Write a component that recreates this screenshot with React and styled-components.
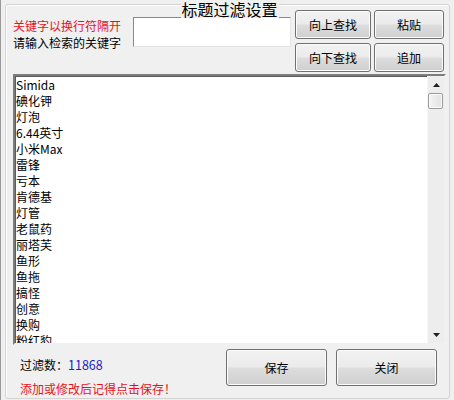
import React from "react";
import styled, { createGlobalStyle } from "styled-components";

const Global = createGlobalStyle`
  html, body { margin: 0; padding: 0; background: #f0f0f0; }
  body { font-family: "Noto Sans CJK SC", "Liberation Sans", sans-serif; font-size: 12px; color: #000; }
  * { box-sizing: border-box; }
`;

const Window = styled.div`
  width: 454px;
  height: 400px;
  background: #f0f0f0;
  border-left: 1px solid #9a9a9a;
  padding: 4px 4px 1px 4px;
`;

const GroupBox = styled.div`
  position: relative;
  height: 100%;
  border: 1px solid #d3d3d3;
  border-radius: 3px;
  box-shadow: inset 1px 1px 0 #ffffff;
  display: flex;
  flex-direction: column;
`;

const Title = styled.div`
  position: absolute;
  top: -4px;
  left: 50%;
  transform: translateX(-50%);
  margin-left: 2px;
  padding: 0 1px;
  background: #f0f0f0;
  font-size: 16px;
  line-height: 17px;
  white-space: nowrap;
`;

const TopRow = styled.div`
  display: flex;
  align-items: flex-start;
  padding: 5px 4px 0 7px;
  height: 67px;
`;

const LabelCol = styled.div`
  width: 120px;
  margin-top: 7px;
  display: flex;
  flex-direction: column;
`;

const Label = styled.div`
  line-height: 17px;
  white-space: nowrap;
  color: ${(p) => p.$color || "#000"};
`;

const TextInput = styled.textarea`
  width: 158px;
  height: 30px;
  margin-top: 7px;
  resize: none;
  outline: none;
  background: #fff;
  border: 1px solid;
  border-color: #8a8a8a #e6e6e6 #e6e6e6 #8a8a8a;
  font: inherit;
  padding: 1px;
`;

const ButtonGrid = styled.div`
  display: grid;
  grid-template-columns: 76px 70px;
  grid-auto-rows: 29px;
  column-gap: 3px;
  row-gap: 4px;
  margin-left: 4px;
`;

const Button = styled.button`
  width: ${(p) => p.$w || "100%"};
  height: ${(p) => p.$h || "100%"};
  border: 1px solid #707070;
  border-radius: 3px;
  background: linear-gradient(#f2f2f2 0%, #ebebeb 48%, #dddddd 52%, #cfcfcf 100%);
  box-shadow: inset 0 0 0 1px #fbfbfb;
  font-family: "Noto Sans CJK SC", "Liberation Sans", sans-serif;
  font-size: 12px;
  color: #000;
  padding: 0;
  cursor: default;
`;

const ListBox = styled.div`
  margin: 2px 3px 0 7px;
  height: 271px;
  display: flex;
  background: #fff;
  border: 2px solid;
  border-color: #7d7d7d #f0f0f0 #f0f0f0 #7d7d7d;
  box-shadow: inset 1px 1px 0 #5a5a5a;
`;

const ListItems = styled.div`
  flex: 1;
  overflow: hidden;
  padding: 1px 0 0 1px;
`;

const Item = styled.div`
  height: 16px;
  line-height: 16px;
  white-space: nowrap;
`;

const ScrollBar = styled.div`
  width: 17px;
  display: flex;
  flex-direction: column;
  background: #ededed;
  border-left: 1px solid #f6f6f6;
`;

const Arrow = styled.div`
  height: 17px;
  display: flex;
  align-items: center;
  justify-content: center;
`;

const Thumb = styled.div`
  height: 16px;
  margin: 0 1px 0 0;
  border: 1px solid #9a9a9a;
  border-radius: 2px;
  background: linear-gradient(90deg, #f3f3f3, #e2e2e2);
  box-shadow: inset 0 0 0 1px #fbfbfb;
`;

const Track = styled.div`
  flex: 1;
`;

const BottomRow = styled.div`
  flex: 1;
  display: flex;
  align-items: flex-start;
  padding: 4px 12px 0 14px;
`;

const Info = styled.div`
  flex: 1;
  padding-top: 7px;
  display: flex;
  flex-direction: column;
  gap: 7px;
`;

const InfoLine = styled.div`
  line-height: 17px;
  white-space: nowrap;
  color: ${(p) => p.$color || "#000"};
`;

const Count = styled.span`
  color: #2020c8;
  font-size: 12.5px;
`;

const ButtonRow = styled.div`
  display: flex;
  gap: 9px;
`;

const UpIcon = () => (
  <svg width="7" height="4" viewBox="0 0 7 4">
    <path d="M0 4 L3.5 0 L7 4 Z" fill="#202020" />
  </svg>
);
const DownIcon = () => (
  <svg width="7" height="4" viewBox="0 0 7 4">
    <path d="M0 0 L3.5 4 L7 0 Z" fill="#202020" />
  </svg>
);

const items = [
  "Simida", "碘化钾", "灯泡", "6.44英寸", "小米Max", "雷锋", "亏本", "肯德基",
  "灯管", "老鼠药", "丽塔芙", "鱼形", "鱼拖", "搞怪", "创意", "换购", "粉红豹",
];

export default function App() {
  return (
    <>
      <Global />
      <Window>
        <GroupBox>
          <Title>标题过滤设置</Title>
          <TopRow>
            <LabelCol>
              <Label $color="#e8101a">关键字以换行符隔开</Label>
              <Label>请输入检索的关键字</Label>
            </LabelCol>
            <TextInput />
            <ButtonGrid>
              <Button>向上查找</Button>
              <Button>粘贴</Button>
              <Button>向下查找</Button>
              <Button>追加</Button>
            </ButtonGrid>
          </TopRow>
          <ListBox>
            <ListItems>
              {items.map((t) => (
                <Item key={t}>{t}</Item>
              ))}
            </ListItems>
            <ScrollBar>
              <Arrow><UpIcon /></Arrow>
              <Thumb />
              <Track />
              <Arrow><DownIcon /></Arrow>
            </ScrollBar>
          </ListBox>
          <BottomRow>
            <Info>
              <InfoLine>过滤数：<Count>11868</Count></InfoLine>
              <InfoLine $color="#e8101a">添加或修改后记得点击保存！</InfoLine>
            </Info>
            <ButtonRow>
              <Button $w="101px" $h="37px">保存</Button>
              <Button $w="101px" $h="37px">关闭</Button>
            </ButtonRow>
          </BottomRow>
        </GroupBox>
      </Window>
    </>
  );
}
